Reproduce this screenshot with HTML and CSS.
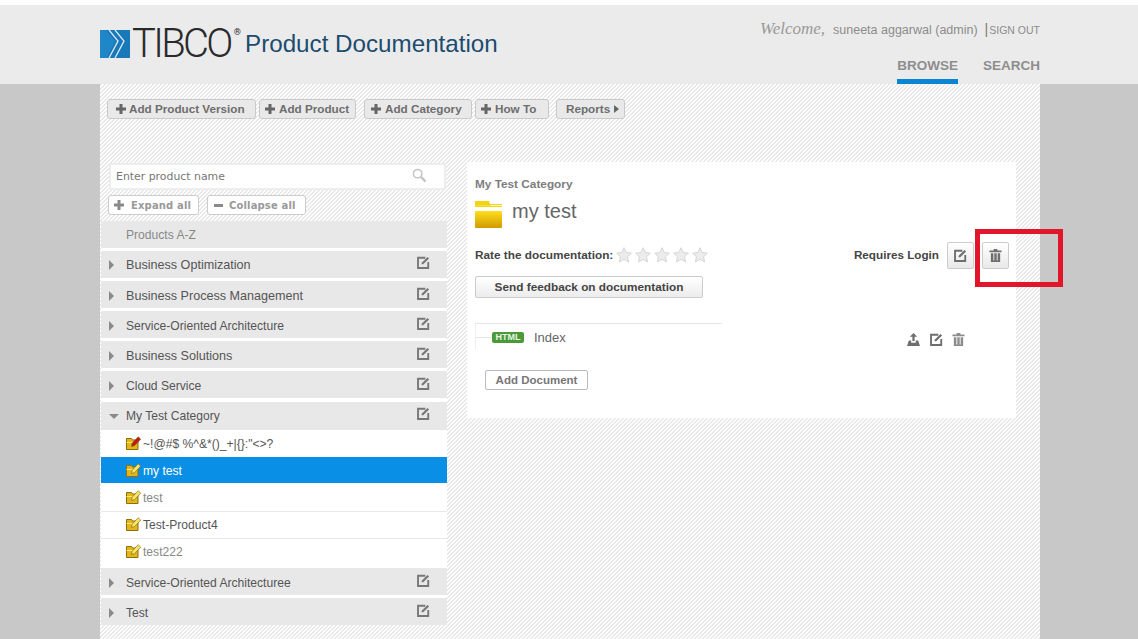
FILE: index.html
```html
<!DOCTYPE html>
<html lang="en">
<head>
<meta charset="utf-8">
<title>TIBCO Product Documentation</title>
<link rel="stylesheet" href="styles.css">
</head>
<body>
<svg class="defs" width="0" height="0" aria-hidden="true">
  <symbol id="edit" viewBox="0 0 14 14">
    <path d="M9 1.900H1.100v11h11V6.500" fill="none" stroke="currentColor" stroke-width="2"/>
    <path d="M5 9V7.300L11.300 1 13 2.700 6.700 9z" fill="currentColor"/>
  </symbol>
  <symbol id="trash" viewBox="0 0 14 14">
    <path d="M5 0h4v1.500h4.500v2H.5v-2H5zM2 4.500h2.700V14H2zM5.700 4.500h2.600V14H5.700zM9.300 4.500H12V14H9.300zM2 12.500h10V14H2z" fill="currentColor"/>
  </symbol>
  <symbol id="upload" viewBox="0 0 14 14">
    <path d="M7 0l4 4H8.200v4.500H5.800V4H3zM2 8h2.500v2.500h5V8H12l2 6H0z" fill="currentColor"/>
  </symbol>
  <symbol id="plus" viewBox="0 0 10 10">
    <path d="M3.500 0h3v3.500H10v3H6.500V10h-3V6.500H0v-3h3.500z" fill="currentColor"/>
  </symbol>
  <symbol id="star" viewBox="0 0 18 18">
    <path d="M9 .8l2.500 5.400 5.800.7-4.300 4 1.200 5.900L9 13.900l-5.200 2.900L5 10.900l-4.300-4 5.800-.7z" fill="#ececec" stroke="#d2d2d2"/>
  </symbol>
  <symbol id="folderpen" viewBox="0 0 15 14">
    <path d="M.5 2.500h5l1 1.500h5.500v9.500H.5z" fill="#e3b71c" stroke="#8f6d08"/>
    <path d="M.5 6.500h7" stroke="#fbe77a"/>
    <path d="M5.500 10.500l.6-3.300L12.200.8l2.500 2.400-6.200 6.500z" fill="currentColor" stroke="#7a5c08" stroke-width=".6"/>
  </symbol>
  <linearGradient id="fold" x1="0" y1="0" x2="0" y2="1">
    <stop offset="0" stop-color="#ffdf1c"/>
    <stop offset="1" stop-color="#d09a00"/>
  </linearGradient>
</svg>

<header class="topbar">
  <div class="topbar-inner">
    <div class="brand">
      <svg class="logo-mark" viewBox="0 0 30 28" aria-hidden="true">
        <rect width="30" height="28" fill="#1878b8"/>
        <path d="M0 0h6l9 11-8 17H0z" fill="#1f86c8"/>
        <path d="M9 0l9 11-9 17M15 0l9 11-9 17" fill="none" stroke="#dcecf6" stroke-width="1.300"/>
      </svg>
      <span class="logo-word">TIBCO<sup class="logo-reg">®</sup></span>
      <span class="product-title">Product Documentation</span>
    </div>
    <div class="account">
      <div class="welcome-line">
        <em class="welcome">Welcome,</em>
        <span class="user">suneeta aggarwal (admin)</span>
        <span class="pipe">|</span><a class="signout">SIGN OUT</a>
      </div>
      <nav class="tabs">
        <a class="tab tab-active">BROWSE</a>
        <a class="tab">SEARCH</a>
      </nav>
    </div>
  </div>
</header>

<main class="wrapper">
  <div class="toolbar">
    <button class="tool tool-a"><svg class="plus"><use href="#plus"/></svg>Add Product Version</button>
    <button class="tool tool-b"><svg class="plus"><use href="#plus"/></svg>Add Product</button>
    <button class="tool tool-c"><svg class="plus"><use href="#plus"/></svg>Add Category</button>
    <button class="tool tool-d"><svg class="plus"><use href="#plus"/></svg>How To</button>
    <button class="tool tool-e">Reports<span class="tri-right"></span></button>
  </div>

  <div class="columns">
    <aside class="sidebar">
      <div class="search">
        <span>Enter product name</span>
        <svg class="search-icon" viewBox="0 0 16 16" aria-hidden="true"><circle cx="6" cy="6" r="4.500" fill="none" stroke="#c4c4c4" stroke-width="1.600"/><path d="M9.500 9.500l5 5" stroke="#c4c4c4" stroke-width="2.400"/></svg>
      </div>
      <div class="expanders">
        <button class="exp exp-open"><svg class="plus"><use href="#plus"/></svg>Expand all</button>
        <button class="exp exp-close"><span class="minus"></span>Collapse all</button>
      </div>
      <div class="tree">
        <div class="row row-head">Products A-Z</div>
        <div class="row row-top"><span class="tri"></span><span class="label label-wide">Business Optimization</span><svg class="row-edit"><use href="#edit"/></svg></div>
        <div class="row"><span class="tri"></span><span class="label label-wide">Business Process Management</span><svg class="row-edit"><use href="#edit"/></svg></div>
        <div class="row"><span class="tri"></span><span class="label">Service-Oriented Architecture</span><svg class="row-edit"><use href="#edit"/></svg></div>
        <div class="row"><span class="tri"></span><span class="label label-wide">Business Solutions</span><svg class="row-edit"><use href="#edit"/></svg></div>
        <div class="row row-before-open"><span class="tri"></span><span class="label">Cloud Service</span><svg class="row-edit"><use href="#edit"/></svg></div>
        <div class="row row-open"><span class="tri-down"></span><span class="label">My Test Category</span><svg class="row-edit"><use href="#edit"/></svg></div>
        <div class="child child-first"><svg class="fp fp-red"><use href="#folderpen"/></svg>~!@#$ %^&amp;*()_+|{}:"&lt;&gt;?</div>
        <div class="child child-sel"><svg class="fp fp-light"><use href="#folderpen"/></svg>my test</div>
        <div class="child child-dim child-tall"><svg class="fp fp-light"><use href="#folderpen"/></svg>test</div>
        <div class="child"><svg class="fp fp-light"><use href="#folderpen"/></svg>Test-Product4</div>
        <div class="child child-dim child-last"><svg class="fp fp-light"><use href="#folderpen"/></svg>test222</div>
        <div class="row"><span class="tri"></span><span class="label">Service-Oriented Architecturee</span><svg class="row-edit"><use href="#edit"/></svg></div>
        <div class="row"><span class="tri"></span><span class="label">Test</span><svg class="row-edit"><use href="#edit"/></svg></div>
      </div>
    </aside>

    <section class="panel">
      <div class="crumb">My Test Category</div>
      <div class="title-row">
        <svg class="folder" viewBox="0 0 27 27" aria-hidden="true">
          <path d="M0 0h14l1 3h12v3H0z" fill="#f4d40f"/>
          <path d="M0 4.500h15l1-.5h11v.8H0z" fill="#fff"/>
          <rect y="10" width="27" height="17" rx="1" fill="url(#fold)"/>
        </svg>
        <h1 class="doc-title">my test</h1>
      </div>
      <div class="rate-row">
        <span class="rate-label">Rate the documentation:</span>
        <span class="stars">
          <svg class="star"><use href="#star"/></svg><svg class="star"><use href="#star"/></svg><svg class="star"><use href="#star"/></svg><svg class="star"><use href="#star"/></svg><svg class="star"><use href="#star"/></svg>
        </span>
        <span class="requires">Requires Login</span>
        <button class="sq"><svg class="sq-icon"><use href="#edit"/></svg></button>
        <button class="sq"><svg class="sq-icon"><use href="#trash"/></svg></button>
      </div>
      <button class="feedback">Send feedback on documentation</button>
      <div class="doc-list">
        <div class="doc-branch">
          <span class="badge">HTML</span>
          <span class="doc-name">Index</span>
        </div>
        <div class="doc-actions">
          <svg class="act"><use href="#upload"/></svg>
          <svg class="act"><use href="#edit"/></svg>
          <svg class="act act-dim"><use href="#trash"/></svg>
        </div>
      </div>
      <button class="add-doc">Add Document</button>
    </section>
  </div>
</main>

<div class="callout"></div>
</body>
</html>
```

FILE: styles.css
```css
* { box-sizing: border-box; }
html, body { margin: 0; height: 639px; overflow: hidden; }
body {
  background: #c8c8c8;
  font-family: "Liberation Sans", Arial, sans-serif;
  color: #555;
  position: relative;
}
button { font-family: inherit; padding: 0; margin: 0; cursor: pointer; }
.defs { position: absolute; }

.topbar {
  margin-top: 5px;
  height: 79px;
  background: #ebebeb;
  box-shadow: 0 -5px 0 #fff;
}
.topbar-inner {
  width: 940px;
  margin-left: 100px;
  height: 79px;
  display: flex;
  justify-content: space-between;
}
.brand { display: flex; align-items: center; height: 79px; }
.logo-mark { width: 30px; height: 28px; display: block; margin-top: -1px; }
.logo-word {
  font-family: Roboto, "Liberation Sans", sans-serif;
  font-weight: 300;
  font-size: 40px;
  line-height: 40px;
  letter-spacing: -2.700px;
  color: #2a2a2c;
  margin-left: 2px;
  width: 113px;
  white-space: nowrap;
  margin-top: -2px;
}
.logo-reg { font-size: 9px; letter-spacing: 0; vertical-align: 22px; line-height: 0; margin-left: 3px; font-weight: 400; }
.product-title { font-size: 24.200px; color: #1c4c6f; margin-top: -2px; white-space: nowrap; }

.account { display: flex; flex-direction: column; align-items: flex-end; }
.welcome-line { display: flex; align-items: baseline; height: 44px; padding-top: 14px; white-space: nowrap; }
.welcome { font-family: "Liberation Serif", serif; font-size: 17px; color: #999; margin-right: 8px; }
.user { font-size: 12.500px; color: #8c8c8c; }
.pipe { font-size: 14px; color: #777; margin-left: 7px; margin-right: 1px; }
.signout { font-size: 10.500px; color: #8c8c8c; }
.tabs { display: flex; gap: 25px; height: 35px; }
.tab {
  font-size: 13.500px;
  font-weight: bold;
  color: #8e8e8e;
  padding-top: 9px;
  height: 35px;
}
.tab-active { border-bottom: 5px solid #0a85d2; }

.wrapper {
  width: 940px;
  height: 555px;
  margin-left: 100px;
  background-color: #fff;
  background-image: linear-gradient(135deg, #e8e8e8 25%, #fff 25%, #fff 50%, #e8e8e8 50%, #e8e8e8 75%, #fff 75%);
  background-size: 4px 4px;
  padding-top: 15px;
}
.toolbar { display: flex; height: 20px; padding-left: 7px; }
.tool {
  height: 20px;
  border: 1px solid #c9c9c9;
  border-radius: 3px;
  background: #e9e9e9;
  color: #6e6e6e;
  font-size: 11.700px;
  font-weight: bold;
  display: flex;
  align-items: center;
  white-space: nowrap;
  padding-bottom: 1px;
}
.tool-a { width: 149px; padding-left: 8px; margin-right: 3px; }
.tool-b { width: 97px; padding-left: 5px; margin-right: 8px; }
.tool-c { width: 108px; padding-left: 6px; margin-right: 3px; }
.tool-d { width: 74px; padding-left: 5px; margin-right: 7px; }
.tool-e { width: 69px; padding-left: 9px; }
.plus { width: 10px; height: 10px; color: #666; margin-right: 3px; flex: none; }
.tool-b .plus, .tool-c .plus, .tool-d .plus { margin-right: 4px; }
.tri-right {
  border-left: 5px solid #666;
  border-top: 4px solid transparent;
  border-bottom: 4px solid transparent;
  margin-left: 4px;
}

.columns { display: flex; margin-top: 43px; }
.sidebar { width: 347px; margin-left: 1px; flex: none; }
.search {
  margin-left: 8px;
  margin-top: 1px;
  width: 337px;
  height: 27px;
  background: #fff;
  border: 2px solid #ededed;
  border-radius: 3px;
  display: flex;
  align-items: center;
  justify-content: space-between;
  padding: 0 17px 0 5px;
  font-family: "DejaVu Sans", Verdana, sans-serif;
  font-size: 10.900px;
  color: #777;
}
.search-icon { width: 15px; height: 15px; margin-top: -3px; }
.expanders { display: flex; gap: 8px; margin: 5px 0 6px 7px; height: 20px; }
.exp {
  height: 20px;
  border: 1px solid #ccc;
  border-radius: 3px;
  background: #fff;
  color: #999;
  font-family: "DejaVu Sans", Verdana, sans-serif;
  font-size: 10px;
  font-weight: bold;
  letter-spacing: .15px;
  display: flex;
  align-items: center;
  white-space: nowrap;
}
.exp .plus { color: #8a8a8a; margin-right: 7px; }
.exp-open { width: 91px; padding-left: 5px; }
.exp-close { width: 99px; padding-left: 6px; }
.minus { width: 9px; height: 3px; background: #8a8a8a; margin-right: 6px; }

.tree { background: #fff; width: 346px; }
.row {
  height: 27px;
  margin-bottom: 3px;
  padding-top: 2px;
  background: #e8e8e8;
  display: flex;
  align-items: center;
  font-size: 12.100px;
  color: #555;
}
.row-head { padding: 0 0 0 25px; color: #888; }
.row-top { padding-top: 0; }
.row-before-open { margin-bottom: 4px; }
.row-open { margin-bottom: 0; height: 28px; padding-top: 0; }
.tri {
  margin-left: 8px;
  border-left: 5px solid #8a8a8a;
  border-top: 5px solid transparent;
  border-bottom: 5px solid transparent;
}
.tri-down {
  margin-left: 8px;
  margin-right: -5px;
  border-top: 5px solid #8a8a8a;
  border-left: 5px solid transparent;
  border-right: 5px solid transparent;
}
.label { margin-left: 12px; white-space: nowrap; }
.label-wide { font-size: 12.600px; }
.row-edit { width: 13px; height: 13px; color: #777; margin-left: auto; margin-right: 17px; margin-top: -5px; flex: none; }

.child {
  height: 27px;
  display: flex;
  align-items: center;
  padding-left: 25px;
  font-size: 12.100px;
  color: #555;
  border-bottom: 1px solid #e8e8e8;
  white-space: nowrap;
}
.child-first { border-bottom: 0; }
.child-tall { height: 28px; margin-top: 1px; }
.child-last { border-bottom: 0; height: 29px; padding-bottom: 4px; }
.child-sel { background: #0a8fe6; color: #fff; height: 26px; border-bottom: 0; padding-top: 1px; }
.child-dim { color: #888; }
.fp { width: 15px; height: 14px; margin-right: 2px; flex: none; margin-top: -2px; }
.fp-red { color: #c41818; }
.fp-light { color: #f5e56a; }

.panel {
  width: 549px;
  height: 256px;
  margin-left: 19px;
  background: #fff;
  padding: 15px 7px 0 8px;
}
.crumb { font-size: 11.800px; font-weight: bold; color: #7d7d7d; line-height: 14px; }
.title-row { display: flex; align-items: center; gap: 10px; margin-top: 10px; height: 27px; }
.folder { width: 27px; height: 27px; }
.doc-title { margin: -6px 0 0; font-size: 20px; font-weight: normal; color: #666; }
.rate-row { display: flex; align-items: center; height: 27px; margin-top: 14px; }
.rate-label { font-size: 11.800px; font-weight: bold; color: #444; margin-top: -2px; }
.stars { display: flex; gap: 3px; margin-left: 3px; margin-top: -1px; }
.star { width: 16px; height: 16px; }
.requires { margin-left: auto; margin-right: 8px; margin-top: -2px; font-size: 11.700px; font-weight: bold; color: #444; }
.sq {
  width: 27px;
  height: 27px;
  border: 1px solid #ccc;
  border-radius: 2px;
  background: linear-gradient(#fff, #e9e9e9);
  color: #6e6e6e;
  display: flex;
  align-items: center;
  justify-content: center;
}
.sq + .sq { margin-left: 8px; }
.sq-icon { width: 13px; height: 13px; }
.feedback {
  display: block;
  width: 228px;
  height: 22px;
  margin-top: 7px;
  border: 1px solid #ccc;
  border-radius: 2px;
  background: linear-gradient(#fff, #ececec);
  font-size: 11.800px;
  font-weight: bold;
  color: #444;
}
.doc-list {
  display: flex;
  justify-content: space-between;
  margin-top: 25px;
  height: 47px;
}
.doc-branch {
  width: 247px;
  height: 26px;
  border-top: 1px solid #e6e6e6;
  border-left: 1px solid #eee;
  display: flex;
  align-items: center;
  position: relative;
  padding: 2px 0 0 16px;
}
.doc-branch::before {
  content: "";
  position: absolute;
  left: 0;
  top: 13px;
  width: 16px;
  border-top: 1px solid #e6e6e6;
}
.badge {
  width: 32px;
  height: 11px;
  background: #4a9a3a;
  border-radius: 2px;
  color: #e8f5e4;
  font-size: 9px;
  font-weight: bold;
  line-height: 11px;
  text-align: center;
}
.doc-name { margin-left: 10px; font-size: 13px; color: #666; }
.doc-actions { display: flex; gap: 10px; margin: 10px 44px 0 0; }
.act { width: 13px; height: 13px; color: #6e6e6e; }
.act-dim { color: #8c8c8c; margin-left: -1px; }
.add-doc {
  display: block;
  margin-left: 10px;
  width: 103px;
  height: 20px;
  border: 1px solid #bbb;
  border-radius: 2px;
  background: #fff;
  font-size: 11.500px;
  font-weight: bold;
  color: #777;
}

.callout {
  position: absolute;
  left: 975px;
  top: 229px;
  width: 88px;
  height: 58px;
  border: 5px solid #e2162a;
}
```
